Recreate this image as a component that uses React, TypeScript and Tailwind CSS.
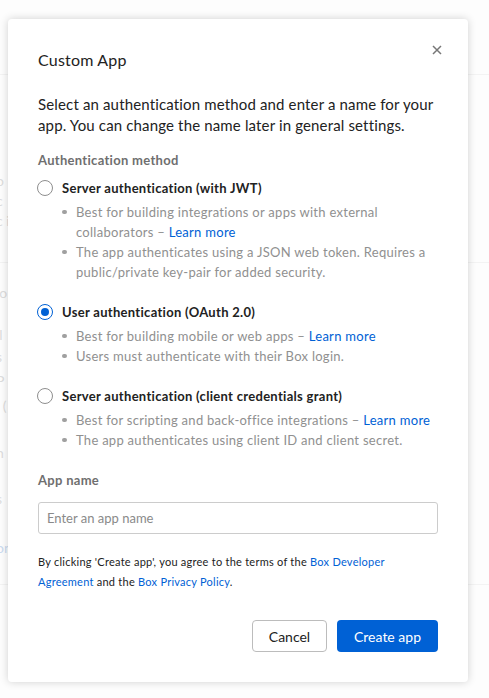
import React from "react";

type Method = {
  id: string;
  label: string;
  bullets: { text: string; link?: boolean }[];
};

const methods: Method[] = [
  {
    id: "jwt",
    label: "Server authentication (with JWT)",
    bullets: [
      { text: "Best for building integrations or apps with external collaborators", link: true },
      { text: "The app authenticates using a JSON web token. Requires a public/private key-pair for added security." },
    ],
  },
  {
    id: "oauth",
    label: "User authentication (OAuth 2.0)",
    bullets: [
      { text: "Best for building mobile or web apps", link: true },
      { text: "Users must authenticate with their Box login." },
    ],
  },
  {
    id: "ccg",
    label: "Server authentication (client credentials grant)",
    bullets: [
      { text: "Best for scripting and back-office integrations", link: true },
      { text: "The app authenticates using client ID and client secret." },
    ],
  },
];

function Radio({ checked }: { checked: boolean }) {
  if (checked) {
    return (
      <span className="flex h-[16px] w-[16px] shrink-0 items-center justify-center rounded-full border-[1.5px] border-[#0061d5] bg-white">
        <span className="h-[8px] w-[8px] rounded-full bg-[#0061d5]" />
      </span>
    );
  }
  return <span className="h-[16px] w-[16px] shrink-0 rounded-full border border-[#8e8e8e] bg-white" />;
}

function MethodOption({ method, checked }: { method: Method; checked: boolean }) {
  return (
    <div>
      <div className="flex items-center gap-[9px] -ml-[1px]">
        <Radio checked={checked} />
        <span className="text-[13px] font-bold leading-[20px] tracking-[0.3px] text-[#222]">{method.label}</span>
      </div>
      <div className="mt-[4px] pl-[24px]">
        {method.bullets.map((b, i) => (
          <div key={i} className="flex text-[13px] leading-[20px] tracking-[0.28px] text-[#909090]">
            <span className="flex h-[20px] w-[14px] shrink-0 items-center">
              <span className="h-[4.5px] w-[4.5px] rounded-full bg-[#a0a0a0]" />
            </span>
            <span>
              {b.text}
              {b.link ? (
                <>
                  {" – "}
                  <a className="text-[#0061d5]">Learn more</a>
                </>
              ) : null}
            </span>
          </div>
        ))}
      </div>
    </div>
  );
}

function BackgroundPage() {
  const rows: { h: number; text?: string; line?: boolean; blue?: boolean }[] = [
    { h: 75, line: true },
    { h: 95 },
    { h: 20, text: "o" },
    { h: 20, text: "c" },
    { h: 20, text: "c i" },
    { h: 33, line: true },
    { h: 19 },
    { h: 20, text: "io" },
    { h: 21 },
    { h: 22, text: "ll" },
    { h: 23, text: "s" },
    { h: 25, text: "P" },
    { h: 25, text: ", (" },
    { h: 23 },
    { h: 23, text: "n" },
    { h: 23 },
    { h: 23, text: "s" },
    { h: 26 },
    { h: 23, text: "on", blue: true },
    { h: 26, line: true },
  ];
  return (
    <div className="flex flex-col">
      {rows.map((r, i) => (
        <div
          key={i}
          className={`flex items-center overflow-hidden ${r.line ? "border-b border-[#ececec]" : ""}`}
          style={{ height: r.h }}
        >
          {r.text ? (
            <span className={`-ml-[4px] text-[14px] ${r.blue ? "text-[#a9c3e6]" : "text-[#c6c6c6]"}`}>{r.text}</span>
          ) : null}
        </div>
      ))}
    </div>
  );
}

export default function App() {
  return (
    <div className="relative h-[698px] w-full overflow-hidden bg-[#fcfcfc]" style={{ fontFamily: "Lato, 'Noto Sans', sans-serif" }}>
      <BackgroundPage />
      <div className="absolute inset-0 bg-white/40">
        <div className="relative ml-[8px] mt-[19px] w-[460px] rounded-[4px] bg-white px-[30px] pb-[30px] pt-[29px] shadow-[0_0_8px_rgba(0,0,0,0.18)]">
          <button className="absolute right-[26px] top-[26px] flex h-[10px] w-[10px] text-[#777]" aria-label="Close">
            <svg width="10" height="10" viewBox="0 0 10 10" fill="none" stroke="currentColor" strokeWidth="1.5">
              <path d="M1 1 L9 9 M9 1 L1 9" />
            </svg>
          </button>
          <h2 className="text-[16px] leading-[24px] tracking-[0.2px] text-[#222]">Custom App</h2>
          <p className="mt-[22px] text-[15px] leading-[21px] tracking-[0.15px] text-[#222]">
            Select an authentication method and enter a name for your app. You can change the name later in general settings.
          </p>
          <div className="mt-[14px] text-[13px] font-bold leading-[20px] tracking-[0.3px] text-[#6f6f6f]">Authentication method</div>
          <div className="mt-[8px] flex flex-col gap-[20px]">
            {methods.map((m) => (
              <MethodOption key={m.id} method={m} checked={m.id === "oauth"} />
            ))}
          </div>
          <div className="mt-[20px] text-[13px] font-bold leading-[20px] tracking-[0.3px] text-[#6f6f6f]">App name</div>
          <input
            className="mt-[12px] h-[32px] w-full rounded-[3px] border border-[#cccccc] px-[8px] text-[13px] text-[#222] outline-none placeholder:text-[#8a8a8a]"
            placeholder="Enter an app name"
          />
          <p className="mt-[18px] text-[11px] leading-[20px] tracking-[0.25px] text-[#222]">
            By clicking 'Create app', you agree to the terms of the <a className="text-[#0061d5]">Box Developer Agreement</a> and the{" "}
            <a className="text-[#0061d5]">Box Privacy Policy</a>.
          </p>
          <div className="mt-[28px] flex justify-end gap-[10px]">
            <button className="h-[32px] w-[75px] rounded-[4px] border border-[#bcbcbc] bg-white text-[14px] text-[#222]">Cancel</button>
            <button className="h-[32px] w-[101px] rounded-[4px] bg-[#0061d5] text-[14px] text-white">Create app</button>
          </div>
        </div>
      </div>
    </div>
  );
}
